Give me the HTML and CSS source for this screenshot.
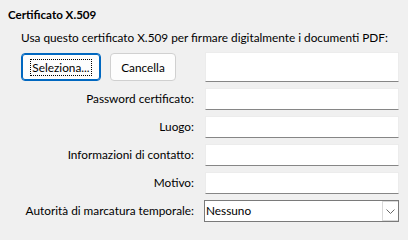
FILE: index.html
```html
<!DOCTYPE html>
<html lang="it">
<head>
<meta charset="utf-8">
<title>Certificato X.509</title>
<link rel="stylesheet" href="styles.css">
</head>
<body>
<div class="panel">
  <div class="title">Certificato X.509</div>
  <div class="desc">Usa questo certificato X.509 per firmare digitalmente i documenti PDF:</div>
  <div class="form">
    <div class="buttons">
      <button class="btn btn-default"><span class="focus">Seleziona...</span></button>
      <button class="btn">Cancella</button>
    </div>
    <div class="field field-tall"></div>

    <div class="label">Password certificato:</div>
    <div class="field"></div>

    <div class="label">Luogo:</div>
    <div class="field"></div>

    <div class="label">Informazioni di contatto:</div>
    <div class="field"></div>

    <div class="label">Motivo:</div>
    <div class="field"></div>

    <div class="label">Autorità di marcatura temporale:</div>
    <div class="combo">
      <span class="combo-text">Nessuno</span>
      <span class="combo-btn">
        <svg width="9" height="5" viewBox="0 0 9 5"><path d="M0.5 0.5 L4.5 4.5 L8.5 0.5" fill="none" stroke="#6a6a6a" stroke-width="1"/></svg>
      </span>
    </div>
  </div>
</div>
</body>
</html>
```
FILE: styles.css
```css
html, body {
  margin: 0;
  padding: 0;
  background: #f0f0f0;
}
body {
  font-family: Lato, "Noto Sans", sans-serif;
  font-size: 11.8px;
  color: #000;
}
.panel {
  padding: 7px 9px 0 8px;
}
.title {
  font-weight: bold;
  font-size: 11.6px;
  line-height: 16px;
  height: 16px;
}
.desc {
  margin-top: 7px;
  padding-left: 13px;
  line-height: 16px;
  height: 16px;
  white-space: nowrap;
}
.form {
  margin-top: 6px;
  padding-left: 13px;
  display: grid;
  grid-template-columns: 174px 194px;
  grid-template-rows: 30px repeat(5, 22px);
  column-gap: 10px;
  row-gap: 6px;
}
.buttons {
  display: flex;
  gap: 9px;
  align-items: center;
}
.btn {
  font: inherit;
  color: #000;
  height: 28px;
  box-sizing: border-box;
  background: #fdfdfd;
  border: 1px solid #d0d0d0;
  border-radius: 4px;
  padding: 0;
  width: 66px;
  display: flex;
  align-items: center;
  justify-content: center;
}
.btn-default {
  width: 80px;
  border: 1px solid #0067c0;
  box-shadow: inset 0 0 0 1px #0067c0;
}
.focus {
  display: block;
  border: 1px dotted #000;
  padding: 0 1px;
  line-height: 15px;
}
.field {
  background: #fff;
  border: 1px solid #ececec;
  border-bottom: 1px solid #868686;
  box-sizing: border-box;
}
.label {
  text-align: right;
  line-height: 22px;
  padding-right: 1px;
  white-space: nowrap;
}
.combo {
  margin-left: -1px;
  background: #fff;
  border: 1px solid #7a7a7a;
  box-sizing: border-box;
  display: flex;
  align-items: center;
  justify-content: space-between;
}
.combo-text {
  padding-left: 1px;
  line-height: 20px;
}
.combo-btn {
  width: 16px;
  height: 20px;
  box-sizing: border-box;
  border: 1px solid #d9d9d9;
  border-right: none;
  display: flex;
  align-items: center;
  justify-content: center;
}
```
